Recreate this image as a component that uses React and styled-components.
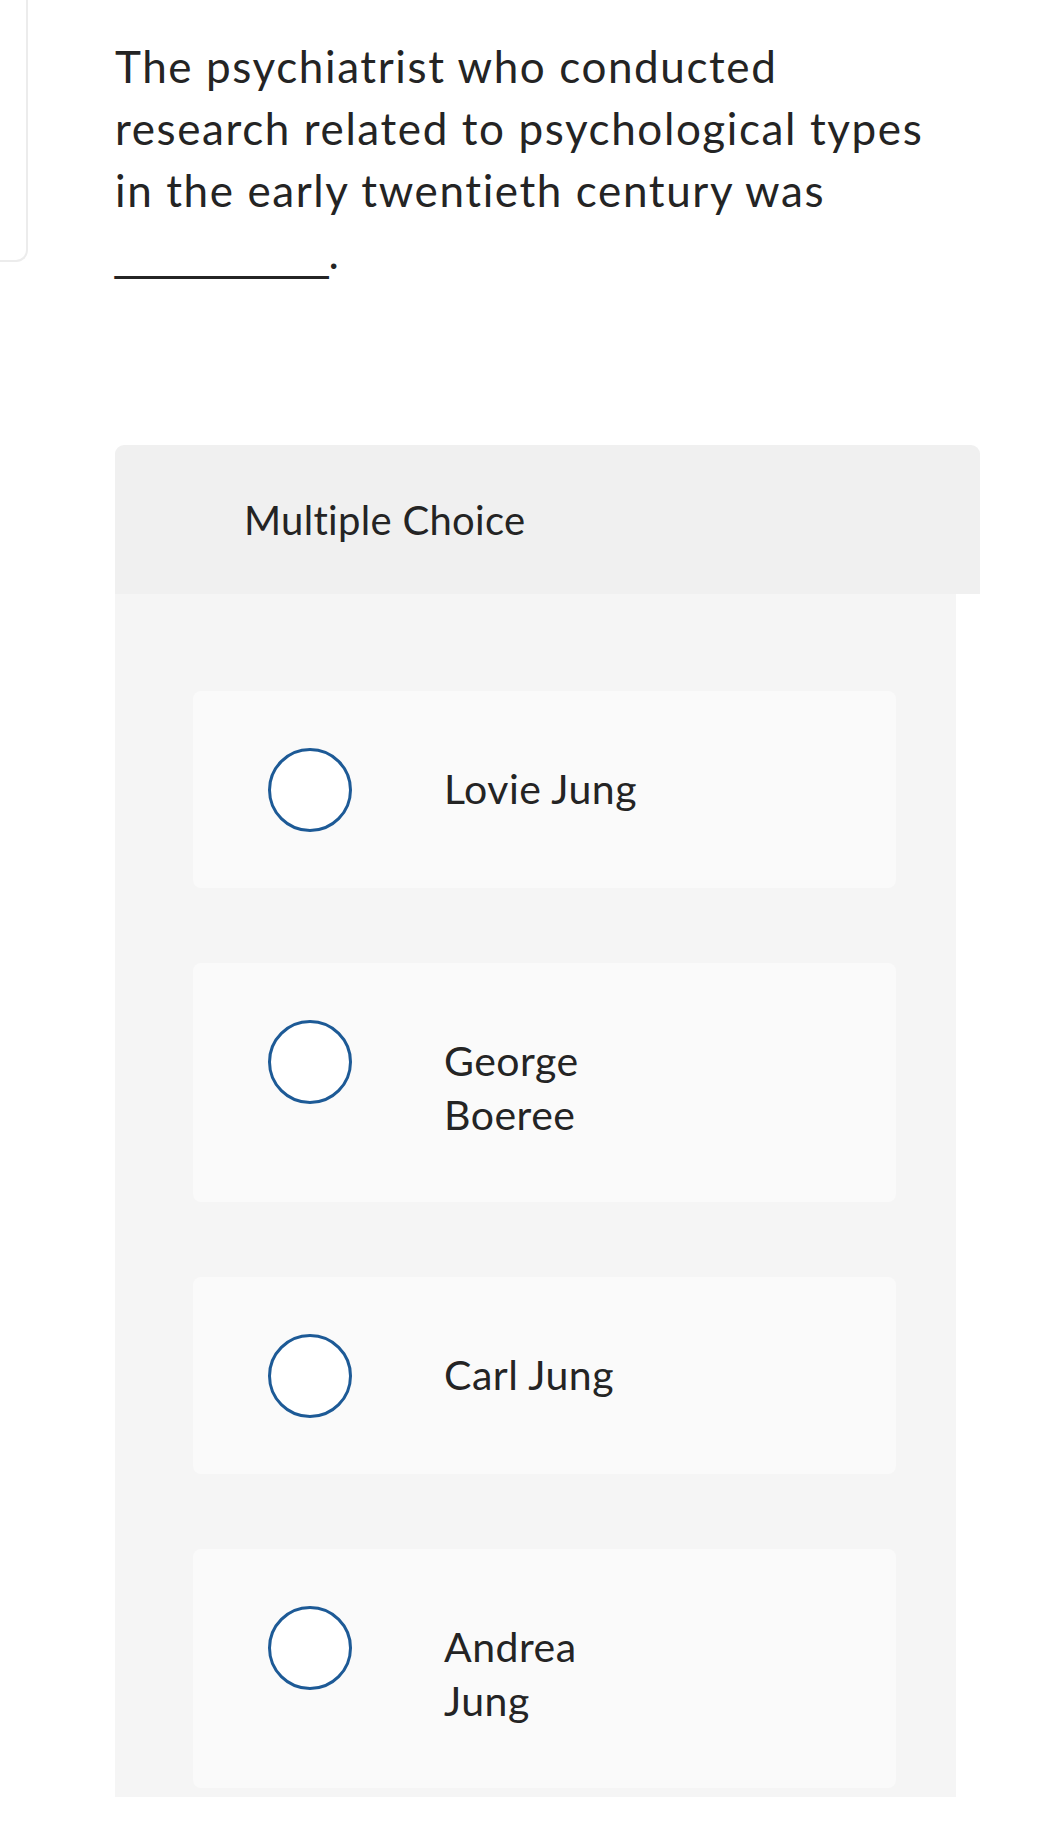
import React from "react";
import styled, { createGlobalStyle } from "styled-components";

const GlobalStyle = createGlobalStyle`
  html, body {
    margin: 0;
    padding: 0;
    background: #ffffff;
  }
  body {
    font-family: "Lato", "Liberation Sans", sans-serif;
    color: #242424;
  }
`;

const Page = styled.div`
  display: flex;
  align-items: flex-start;
  min-height: 1833px;
  box-sizing: border-box;
`;

const SideStub = styled.div`
  flex-shrink: 0;
  width: 28px;
  height: 262px;
  box-sizing: border-box;
  border-right: 2px solid #ececec;
  border-bottom: 2px solid #ececec;
  border-bottom-right-radius: 12px;
`;

const Main = styled.div`
  margin-left: 87px;
  padding-top: 35px;
  display: flex;
  flex-direction: column;
`;

const Question = styled.p`
  margin: 0;
  width: 838px;
  font-size: 44px;
  line-height: 62px;
  letter-spacing: 1.6px;
  color: #242424;
`;

const Blank = styled.span`
  font-family: "Liberation Sans", sans-serif;
  font-size: 48px;
  letter-spacing: 0;
`;

const Panel = styled.section`
  margin-top: 161px;
  display: flex;
  flex-direction: column;
`;

const PanelHeader = styled.div`
  width: 865px;
  height: 149px;
  box-sizing: border-box;
  display: flex;
  align-items: center;
  padding-left: 129px;
  background: #f0f0f0;
  border-radius: 9px 9px 0 0;
  font-size: 40px;
  letter-spacing: 0.3px;
  color: #242424;
`;

const PanelBody = styled.div`
  width: 841px;
  box-sizing: border-box;
  padding: 97px 0 9px 78px;
  background: #f5f5f5;
  display: flex;
  flex-direction: column;
  gap: 75px;
`;

const Choice = styled.label`
  width: 703px;
  box-sizing: border-box;
  display: flex;
  align-items: flex-start;
  padding: 57px 0 56px 75px;
  background: #fafafa;
  border-radius: 8px;
  cursor: pointer;
`;

const Radio = styled.span`
  flex-shrink: 0;
  width: 84px;
  height: 84px;
  box-sizing: border-box;
  border-radius: 50%;
  border: 3px solid #1d5a96;
  background: #ffffff;
`;

const ChoiceText = styled.span`
  margin-left: 92px;
  width: ${(p) => p.width}px;
  padding: 14px 0 4px;
  font-size: 41px;
  line-height: 54px;
  letter-spacing: 0.5px;
  color: #242424;
`;

const choices = ["Lovie Jung", "George Boeree", "Carl Jung", "Andrea Jung"];

const App = () => {
  return (
    <>
      <GlobalStyle />
      <Page>
        <SideStub />
        <Main>
          <Question>
            The psychiatrist who conducted research related to psychological
            types in the early twentieth century was <Blank>________</Blank>.
          </Question>
          <Panel>
            <PanelHeader>Multiple Choice</PanelHeader>
            <PanelBody>
              {choices.map((choice) => (
                <Choice key={choice}>
                  <Radio />
                  <ChoiceText width={210}>{choice}</ChoiceText>
                </Choice>
              ))}
            </PanelBody>
          </Panel>
        </Main>
      </Page>
    </>
  );
};

export default App;
